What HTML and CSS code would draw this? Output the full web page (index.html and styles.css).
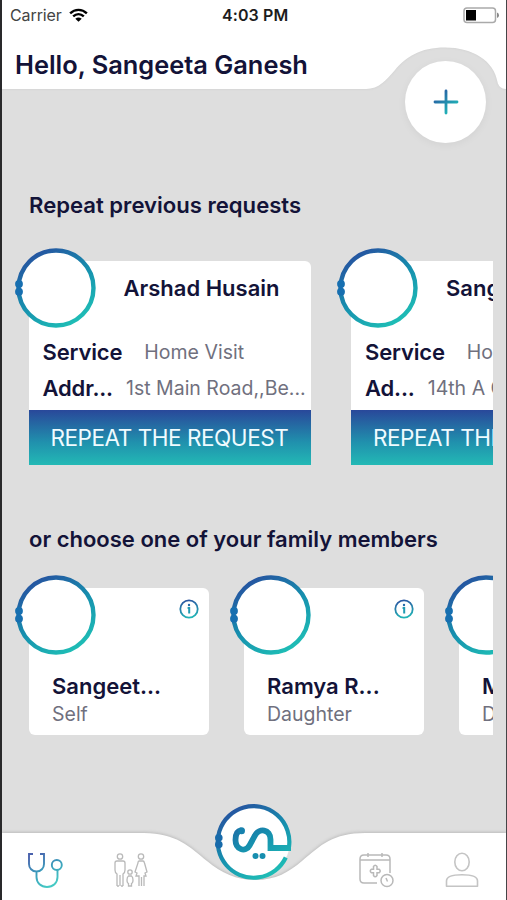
FILE: index.html
```
<!DOCTYPE html>
<html lang="en">
<head>
<meta charset="utf-8">
<title>Home</title>
<link rel="stylesheet" href="styles.css">
</head>
<body>
<svg class="defs" width="0" height="0" aria-hidden="true">
  <defs>
    <linearGradient id="ringGrad" gradientUnits="userSpaceOnUse" x1="18" y1="6" x2="62" y2="78">
      <stop offset="0" stop-color="#2652a0"/><stop offset=".5" stop-color="#168fae"/><stop offset="1" stop-color="#1fc0b6"/>
    </linearGradient>
    <linearGradient id="infoGrad" gradientUnits="userSpaceOnUse" x1="8" y1="0" x2="12" y2="20">
      <stop offset="0" stop-color="#2b50a0"/><stop offset="1" stop-color="#20bdb8"/>
    </linearGradient>
    <symbol id="ring" viewBox="0 0 82 82">
      <circle cx="42" cy="41" r="37.500" fill="#fff" stroke="url(#ringGrad)" stroke-width="4.400"/>
      <circle cx="5" cy="37" r="3.900" fill="#176fb0"/>
      <circle cx="5" cy="44.700" r="3.900" fill="#176fb0"/>
    </symbol>
    <symbol id="info" viewBox="0 0 20 20">
      <circle cx="10" cy="10" r="8.700" fill="none" stroke="url(#infoGrad)" stroke-width="1.800"/>
      <circle cx="10" cy="6" r="1.200" fill="#246aa9"/>
      <path d="M8.600 9H10.200V14.500" fill="none" stroke="#209bb2" stroke-width="2"/>
    </symbol>
  </defs>
</svg>
<div class="app">
  <header class="header">
    <svg class="header-shape" viewBox="0 0 504 92" aria-hidden="true">
      <path d="M0 0H504V89C499 89 496.500 86 495.500 82C492 61 471 47.500 443 47.500C418 47.500 404 57 393 70C384 80 377 89 364 89H0Z"/>
    </svg>
    <div class="status">
      <span class="carrier">Carrier</span>
      <svg class="wifi" viewBox="0 0 20 15"><g fill="none" stroke="#000" stroke-width="2.500"><path d="M1.200 5.200C6.200 .3 13.800 .3 18.800 5.200"/><path d="M4.400 8.500C7.700 5.400 12.300 5.400 15.600 8.500"/></g><path d="M10 14L6.600 10.800Q10 8.200 13.400 10.800Z"/></svg>
      <span class="time">4:03 PM</span>
      <svg class="battery" viewBox="0 0 37 17"><rect x="1" y="1" width="31.500" height="14.500" rx="3" fill="#fff" stroke="#aaa" stroke-width="1.500"/><rect x="3" y="3" width="10" height="10.500"/><path d="M34 5.500Q36 6 36 8.200T34 11Z" fill="#888"/></svg>
    </div>
    <h1 class="hello">Hello, Sangeeta Ganesh</h1>
    <button class="add" aria-label="Add">
      <svg viewBox="0 0 26 26"><defs><linearGradient id="plusGrad" gradientUnits="userSpaceOnUse" x1="5" y1="3" x2="20" y2="20"><stop offset="0" stop-color="#2858a2"/><stop offset="1" stop-color="#20b4b7"/></linearGradient></defs><path d="M13 2V24M2 13H24" fill="none" stroke="url(#plusGrad)" stroke-width="2.800" stroke-linecap="round"/></svg>
    </button>
  </header>

  <main class="content">
    <h2 class="section-title repeat-title">Repeat previous requests</h2>
    <div class="scroller requests">
      <article class="request">
        <svg class="ring"><use href="#ring"/></svg>
        <h3 class="request-name">Arshad Husain</h3>
        <div class="row"><b class="label">Service</b><span class="value visit">Home Visit</span></div>
        <div class="row"><b class="label">Addr...</b><span class="value road">1st Main Road,,Be...</span></div>
        <button class="repeat">REPEAT THE REQUEST</button>
      </article>
      <article class="request">
        <svg class="ring"><use href="#ring"/></svg>
        <h3 class="request-name">Sangeeta</h3>
        <div class="row"><b class="label">Service</b><span class="value visit">Home Visit</span></div>
        <div class="row"><b class="label">Ad...</b><span class="value road">14th A Cross</span></div>
        <button class="repeat">REPEAT THE REQUEST</button>
      </article>
    </div>
    <h2 class="section-title family-title">or choose one of your family members</h2>
    <div class="scroller family">
      <article class="member">
        <svg class="ring"><use href="#ring"/></svg>
        <svg class="info"><use href="#info"/></svg>
        <h3 class="member-name">Sangeet...</h3>
        <p class="relation">Self</p>
      </article>
      <article class="member">
        <svg class="ring"><use href="#ring"/></svg>
        <svg class="info"><use href="#info"/></svg>
        <h3 class="member-name">Ramya R...</h3>
        <p class="relation">Daughter</p>
      </article>
      <article class="member">
        <svg class="ring"><use href="#ring"/></svg>
        <svg class="info"><use href="#info"/></svg>
        <h3 class="member-name">M...</h3>
        <p class="relation">Daughter</p>
      </article>
    </div>
  </main>

  <nav class="tabs">
    <svg class="tabs-shape" viewBox="0 0 504 75" aria-hidden="true"><path d="M0 8H142C174 8 188 22 205 36C219 48 235 55 253 55C274 55 287 47 300 36C319 20 331 8 363 8H504V75H0Z"/></svg>
    <svg class="tab stethoscope" viewBox="0 0 36 36"><defs><linearGradient id="stGrad" gradientUnits="userSpaceOnUse" x1="4" y1="4" x2="20" y2="35"><stop offset="0" stop-color="#4a62ad"/><stop offset=".5" stop-color="#3b9abb"/><stop offset="1" stop-color="#45c9c4"/></linearGradient></defs><g fill="none" stroke="url(#stGrad)" stroke-width="1.900"><path d="M6 2H2V12C2 16 5 19.500 9.500 19.500S17 16 17 12V2H13M9.500 19.500V25C9.500 31 14 35 20 35S30.500 31 30.500 25V18"/><circle cx="29.800" cy="13" r="5"/></g></svg>
    <svg class="tab people" viewBox="0 0 34 36"><g fill="none" stroke="#b9b9b9" stroke-width="1.300"><circle cx="6" cy="4.500" r="2.700"/><path d="M3 34V22Q1 21 1 18V11Q1 9 3 9H9Q11 9 11 11V18Q11 21 9 22V34M6 23V34M3 34H5M7 34H9"/><circle cx="27" cy="4.500" r="2.700"/><path d="M25 9H29Q30 9 30.500 11L33 20L31 21L32 24H30V34M25 34V24H22L23 21L21 20L24 11Q24 9 25 9M27.500 25V34"/><circle cx="16" cy="20" r="2.200"/><path d="M14.500 24H17.500Q19 25 19 28Q19 31 17.500 31.500V34H14.500V31.500Q13 31 13 28Q13 25 14.500 24Z"/></g></svg>
    <svg class="tab logo" viewBox="0 0 78 80">
      <defs><linearGradient id="logoGrad" gradientUnits="userSpaceOnUse" x1="18" y1="6" x2="58" y2="74"><stop offset="0" stop-color="#2652a0"/><stop offset=".5" stop-color="#168eae"/><stop offset="1" stop-color="#1fbeb6"/></linearGradient></defs>
      <circle cx="39" cy="40.500" r="36" fill="#fff"/>
      <g fill="none" stroke="url(#logoGrad)">
        <path d="M70.800 56.500A35.800 35.800 0 1 1 74 46" stroke-width="4.200"/>
        <path d="M76 47H55.500V38.500C55.500 28 44 26.500 40 34.500L34.500 44.500C30.500 52 20.500 48.500 20.500 39C20.500 33 22 30 26 29.500" stroke-width="5.800"/>
      </g>
      <circle cx="26.500" cy="29.800" r="3.500" fill="#1782ae"/>
      <circle cx="40.500" cy="55" r="3" fill="#178eaf"/><circle cx="47.500" cy="55" r="3" fill="#178eaf"/>
      <circle cx="3.800" cy="36.700" r="3.800" fill="#176aaa"/><circle cx="3.800" cy="43.600" r="3.800" fill="#176aaa"/>
    </svg>
    <svg class="tab calendar" viewBox="0 0 36 36"><g fill="none" stroke="#b9b9b9" stroke-width="1.500"><path d="M19 31H6Q2 31 2 27V7Q2 3 6 3H28Q32 3 32 7V21M2 8H32M10 1V5M24 1V5"/><path d="M15.500 14.500Q17.200 12 19 14.500V17.200H21Q23.500 19 21 20.800H19V23.500Q17.200 26 15.500 23.500V20.800H13.500Q11 19 13.500 17.200H15.500Z"/><circle cx="29" cy="28.500" r="6"/><path d="M28 26L29.500 29.500"/></g></svg>
    <svg class="tab person" viewBox="0 0 34 36"><g fill="none" stroke="#c4c4c4" stroke-width="1.600"><ellipse cx="17" cy="10" rx="7.200" ry="8.700"/><path d="M1.500 34.200V29C1.500 24 8 22.800 17 22.800S32.500 24 32.500 29V34.200Z" stroke-linejoin="round"/></g></svg>
  </nav>
</div>
</body>
</html>
```

FILE: styles.css
```
* { box-sizing: border-box; }
body { margin: 0; font-family: Inter, "Liberation Sans", sans-serif; color: #131338; }
h1, h2, h3, p { margin: 0; font-weight: 600; white-space: nowrap; }
button { border: 0; padding: 0; font-family: inherit; }
svg { display: block; overflow: visible; }
.defs { position: absolute; }
.app { width: 507px; height: 900px; display: flex; flex-direction: column; overflow: hidden; background: #dedede; border-left: 2px solid #29292b; border-right: 1px solid #454547; }
.header { position: relative; height: 150px; flex: none; }
.header-shape { position: absolute; left: 0; top: 0; width: 504px; height: 92px; fill: #fff; filter: drop-shadow(0 0 1px #ccc); }
.status { position: relative; height: 30px; display: grid; grid-template-columns: 52px 19px 1fr 37px; column-gap: 8px; align-items: center; padding: 0 6px 0 8px; color: #1c1c1c; }
.carrier { font-size: 16px; letter-spacing: -.1px; color: #444; }
.wifi { width: 19px; height: 15px; margin-left: -1px; }
.time { font-size: 16px; font-weight: 600; justify-self: start; margin-left: 125px; letter-spacing: .1px; white-space: nowrap; }
.battery { width: 37px; height: 17px; }
.hello { position: relative; padding: 19px 0 0 13px; font-size: 25.4px; line-height: 32px; }
.add { position: absolute; left: 403px; top: 61px; width: 81px; height: 82px; border-radius: 50%; background: #fff; display: grid; place-items: center; box-shadow: 0 2px 8px #0000000d; }
.add svg { width: 26px; height: 26px; }
.content { flex: 1; min-height: 0; }
.section-title { padding-left: 27px; font-size: 22.1px; line-height: 30px; }
.repeat-title { margin-top: 40px; }
.scroller { display: flex; overflow: hidden; margin-right: 13px; padding: 15px 0 0 26.5px; }
.requests { margin-top: 26px; height: 219px; gap: 40px; }
.request { flex: none; position: relative; width: 282.5px; height: 204px; display: flex; flex-direction: column; background: #fff; border-radius: 6px 6px 0 0; }
.ring { position: absolute; left: -15px; top: -14px; width: 82px; height: 82px; }
.request-name { padding: 11px 0 0 95px; height: 73px; font-size: 22px; line-height: 32px; }
.row { display: flex; align-items: center; height: 36px; padding-left: 14px; white-space: nowrap; }
.label { font-size: 22px; font-weight: 600; letter-spacing: -.15px; }
.value { font-size: 19.5px; color: #70707e; }
.visit { margin-left: 22px; }
.road { margin-left: 13px; }
.repeat { margin-top: auto; height: 55px; background: linear-gradient(#29489a, #2090ad 58%, #23b9b5); color: #effbff; font-size: 22.5px; letter-spacing: -.45px; text-align: left; padding-left: 22px; white-space: nowrap; }
.family-title { margin-top: 59px; font-size: 22px; }
.family { margin-top: 19px; gap: 34.5px; height: 162px; }
.member { flex: none; position: relative; width: 180.5px; height: 147px; padding: 83px 0 0 23.5px; border-radius: 6px; background: #fff; }
.info { position: absolute; right: 10.500px; top: 10.500px; width: 20px; height: 20px; }
.member-name { font-size: 22px; line-height: 31px; }
.relation { font-size: 19.5px; line-height: 25px; font-weight: 400; color: #70707e; }
.tabs { position: relative; flex: none; height: 75px; display: flex; align-items: flex-start; padding-left: 25px; }
.tabs-shape { position: absolute; left: 0; top: 0; width: 504px; height: 75px; fill: #fff; filter: drop-shadow(0 -1px 1.500px #bbb); }
.tab { position: relative; flex: none; width: 36px; height: 36px; margin-top: 27px; }
.people { width: 34px; margin-left: 51px; }
.logo { width: 78px; height: 80px; margin: -24px 0 0 67px; }
.calendar { margin-left: 65px; }
.person { width: 34px; margin-left: 51px; }
```
